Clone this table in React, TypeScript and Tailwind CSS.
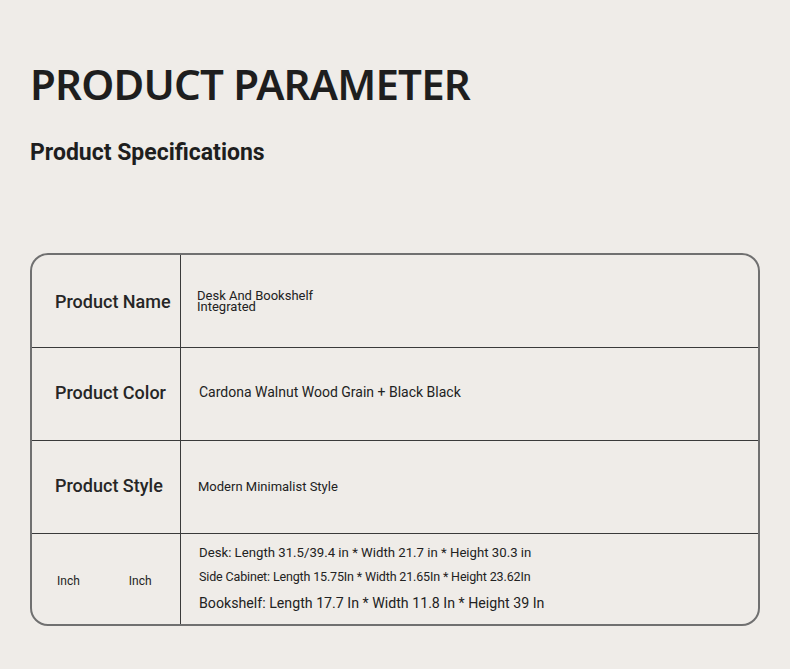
import React from "react";

export default function App() {
  const roboto = { fontFamily: "Roboto, 'Liberation Sans', sans-serif" };
  return (
    <div className="w-[790px] h-[669px] bg-[#efece8] text-[#222] pl-[30px] pt-[62px]" style={roboto}>
      <h1
        className="text-[42px] leading-[44px] font-semibold tracking-[-0.8px] text-[#1e1e1e]"
        style={{ fontFamily: "'Noto Sans', 'Open Sans', sans-serif" }}
      >
        PRODUCT PARAMETER
      </h1>
      <h2 className="mt-[35px] text-[23px] leading-[23px] font-bold text-[#1e1e1e]">Product Specifications</h2>

      <div className="mt-[89px] w-[730px] border-2 border-[#707070] rounded-[18px] overflow-hidden">
        <div className="flex h-[93px] border-b border-[#3a3a3a]">
          <div className="w-[149px] border-r border-[#3a3a3a] flex items-center pl-[23px] text-[18px] font-medium text-[#262626]">
            Product Name
          </div>
          <div className="flex-1 flex items-center pl-[16px]">
            <div className="text-[13px] leading-[11.5px]">
              Desk And Bookshelf
              <br />
              Integrated
            </div>
          </div>
        </div>
        <div className="flex h-[93px] border-b border-[#3a3a3a]">
          <div className="w-[149px] border-r border-[#3a3a3a] flex items-center pl-[23px] text-[18px] font-medium text-[#262626] pb-[4px]">
            Product Color
          </div>
          <div className="flex-1 flex items-center pl-[18px] text-[14px] pb-[4px]">
            Cardona Walnut Wood Grain + Black Black
          </div>
        </div>
        <div className="flex h-[93px] border-b border-[#3a3a3a]">
          <div className="w-[149px] border-r border-[#3a3a3a] flex items-center pl-[23px] text-[18px] font-medium text-[#262626] pb-[4px]">
            Product Style
          </div>
          <div className="flex-1 flex items-center pl-[17px] text-[13px]">
            Modern Minimalist Style
          </div>
        </div>
        <div className="flex h-[90px]">
          <div className="w-[149px] border-r border-[#3a3a3a] flex items-center pl-[25px] gap-[49px] text-[12px] pt-[4px]">
            <span>Inch</span>
            <span>Inch</span>
          </div>
          <div className="flex-1 flex flex-col justify-center pl-[18px]">
            <div className="text-[13.2px] leading-[24px]">Desk: Length 31.5/39.4 in * Width 21.7 in * Height 30.3 in</div>
            <div className="text-[12.5px] leading-[24px] tracking-[-0.15px]">
              Side Cabinet: Length 15.75In * Width 21.65In * Height 23.62In
            </div>
            <div className="text-[14.2px] leading-[28px]">Bookshelf: Length 17.7 In * Width 11.8 In * Height 39 In</div>
          </div>
        </div>
      </div>
    </div>
  );
}
